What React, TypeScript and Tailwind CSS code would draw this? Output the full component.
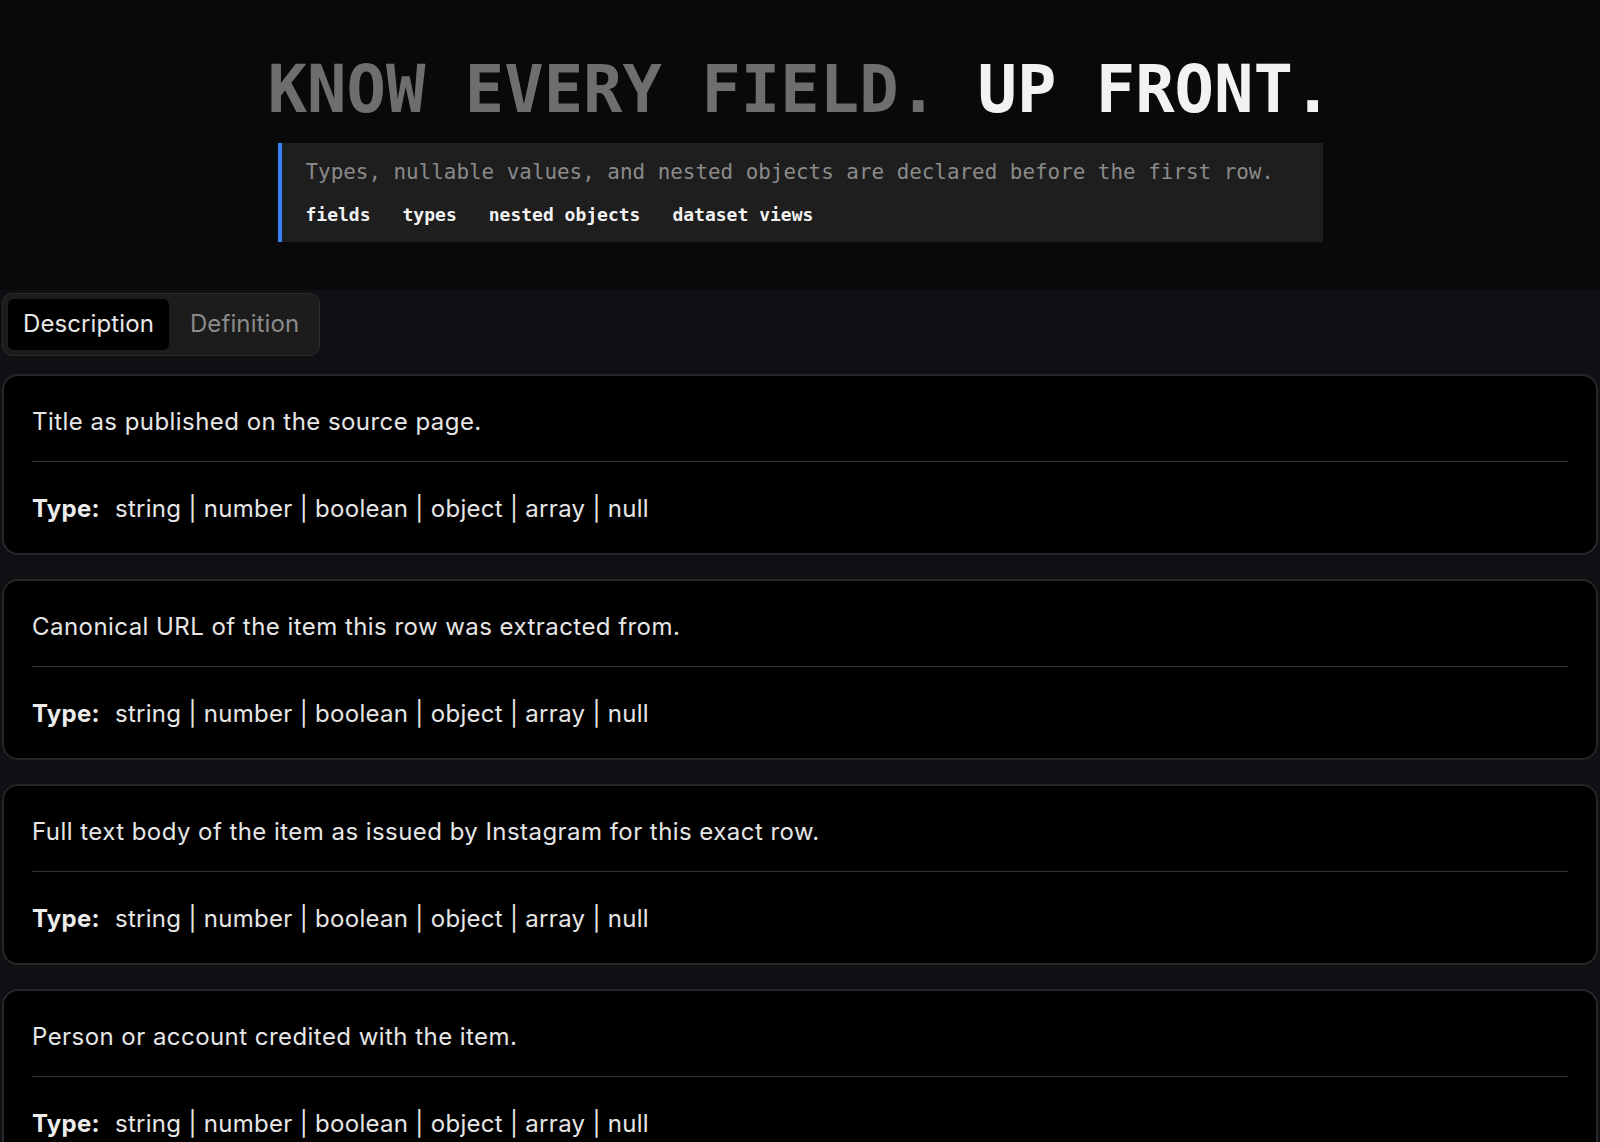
const fields = [
  'Title as published on the source page.',
  'Canonical URL of the item this row was extracted from.',
  'Full text body of the item as issued by Instagram for this exact row.',
  'Person or account credited with the item.',
  'Date and time the item was first published.',
];

const types = ['string', 'number', 'boolean', 'object', 'array', 'null'];

const tags = ['fields', 'types', 'nested objects', 'dataset views'];

const mono = "font-['DejaVu_Sans_Mono','Liberation_Mono',monospace]";

const FieldCard = ({ text }: { text: string }) => {
  return (
    <div className="rounded-2xl border-2 border-[#262626] bg-black px-7 pt-7 pb-[26px]">
      <p className="text-[24px] leading-9 tracking-[0.45px] text-[#e6e6e6]">{text}</p>
      <div className="mt-[21px] mb-[29px] h-px bg-[#343434]"></div>
      <p className="text-[24px] leading-9 tracking-[0.3px] text-[#e6e6e6]">
        <strong className="mr-[15px] font-bold text-[#ececec]">Type:</strong>
        {types.join(' | ')}
      </p>
    </div>
  );
};

const App = () => {
  return (
    <div className="min-h-screen bg-[#0e1014] font-['Inter','Liberation_Sans',sans-serif]">
      {/* Header */}
      <header className="bg-[#090909] pt-[57px] pb-[48px]">
        <h1 className={`${mono} text-center text-[65.5px] font-bold leading-none`}>
          <span className="text-[#6e6e6e]">KNOW EVERY FIELD.</span>{' '}
          <span className="text-[#f2f2f2]">UP FRONT.</span>
        </h1>
        <div className="mx-auto mt-5 w-[1045px] border-l-4 border-[#3b82f6] bg-[#1e1e1e] pt-[14px] pb-3.5 pl-6">
          <p className={`${mono} text-[20.9px] leading-[31px] text-[#8a8a8a]`}>
            Types, nullable values, and nested objects are declared before the first row.
          </p>
          <div className={`${mono} mt-[13px] flex gap-8 text-[18px] font-bold leading-[27px] text-[#f2f2f2]`}>
            {tags.map((t) => (
              <span key={t}>{t}</span>
            ))}
          </div>
        </div>
      </header>

      {/* Tabs + field list */}
      <section className="px-[2px] pt-[3px] pb-6">
        <div className="inline-flex gap-1.5 rounded-[10px] border border-[#2a2a2a] bg-[#1c1c1c] p-[5px]">
          <button className="h-[51px] rounded-md bg-black px-[15px] text-[24px] tracking-[0.1px] text-[#e8e8e8]">
            Description
          </button>
          <button className="h-[51px] rounded-md px-[15px] text-[24px] tracking-[0.1px] text-[#8a8a8a]">
            Definition
          </button>
        </div>

        <div className="mt-[18px] flex flex-col gap-6">
          {fields.map((f) => (
            <FieldCard key={f} text={f} />
          ))}
        </div>
      </section>
    </div>
  );
};

export default App;
